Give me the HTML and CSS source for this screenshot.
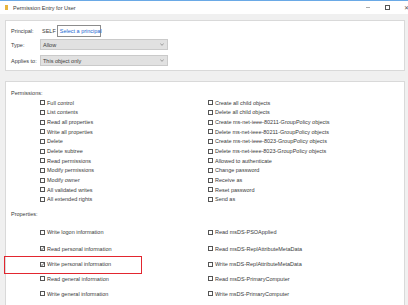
FILE: index.html
```html
<!DOCTYPE html>
<html lang="en">
<head>
  <meta charset="UTF-8" />
  <title>Permission Entry for User</title>
  <link rel="stylesheet" href="styles.css">
</head>
<body>
  <div class="titlebar">
    <span class="folder"></span>
    <span class="title">Permission Entry for User</span>
    <div class="controls">
      <span class="min"></span>
      <span class="max"></span>
      <span class="close">✕</span>
    </div>
  </div>

  <div class="main">
    <!-- principal / type / applies to -->
    <div class="panel head">
      <div class="field principal">
        <span class="label">Principal:</span>
        <span class="self">SELF</span>
        <button class="pick" type="button">Select a principal</button>
      </div>
      <div class="field type">
        <span class="label">Type:</span>
        <div class="combo">Allow
          <svg class="chev" viewBox="0 0 6 4"><path d="M0.5 0.8 L3 3.2 L5.5 0.8" /></svg>
        </div>
      </div>
      <div class="field applies">
        <span class="label">Applies to:</span>
        <div class="combo">This object only
          <svg class="chev" viewBox="0 0 6 4"><path d="M0.5 0.8 L3 3.2 L5.5 0.8" /></svg>
        </div>
      </div>
    </div>

    <!-- permissions and properties -->
    <div class="panel perms">
      <div class="section">Permissions:</div>
      <div class="checks">
        <label class="chk"><span class="box"></span>Full control</label>
        <label class="chk"><span class="box"></span>List contents</label>
        <label class="chk"><span class="box"></span>Read all properties</label>
        <label class="chk"><span class="box"></span>Write all properties</label>
        <label class="chk"><span class="box"></span>Delete</label>
        <label class="chk"><span class="box"></span>Delete subtree</label>
        <label class="chk"><span class="box"></span>Read permissions</label>
        <label class="chk"><span class="box"></span>Modify permissions</label>
        <label class="chk"><span class="box"></span>Modify owner</label>
        <label class="chk"><span class="box"></span>All validated writes</label>
        <label class="chk"><span class="box"></span>All extended rights</label>

        <label class="chk"><span class="box"></span>Create all child objects</label>
        <label class="chk"><span class="box"></span>Delete all child objects</label>
        <label class="chk"><span class="box"></span>Create ms-net-ieee-80211-GroupPolicy objects</label>
        <label class="chk"><span class="box"></span>Delete ms-net-ieee-80211-GroupPolicy objects</label>
        <label class="chk"><span class="box"></span>Create ms-net-ieee-8023-GroupPolicy objects</label>
        <label class="chk"><span class="box"></span>Delete ms-net-ieee-8023-GroupPolicy objects</label>
        <label class="chk"><span class="box"></span>Allowed to authenticate</label>
        <label class="chk"><span class="box"></span>Change password</label>
        <label class="chk"><span class="box"></span>Receive as</label>
        <label class="chk"><span class="box"></span>Reset password</label>
        <label class="chk"><span class="box"></span>Send as</label>
      </div>

      <div class="section props-title">Properties:</div>
      <div class="checks props">
        <label class="chk"><span class="box"></span>Write logon information</label>
        <label class="chk"><span class="box"><svg viewBox="0 0 5 5"><path d="M0.9 2.4 L2 3.6 L4.1 1.1" /></svg></span>Read personal information</label>
        <label class="chk marked"><span class="box"><svg viewBox="0 0 5 5"><path d="M0.9 2.4 L2 3.6 L4.1 1.1" /></svg></span>Write personal information</label>
        <label class="chk"><span class="box"></span>Read general information</label>
        <label class="chk"><span class="box"></span>Write general information</label>

        <label class="chk"><span class="box"></span>Read msDS-PSOApplied</label>
        <label class="chk"><span class="box"></span>Read msDS-ReplAttributeMetaData</label>
        <label class="chk"><span class="box"></span>Write msDS-ReplAttributeMetaData</label>
        <label class="chk"><span class="box"></span>Read msDS-PrimaryComputer</label>
        <label class="chk"><span class="box"></span>Write msDS-PrimaryComputer</label>
      </div>
    </div>
  </div>
</body>
</html>
```

FILE: styles.css
```css
body {
  margin: 0;
  width: 408px;
  height: 305px;
  overflow: hidden;
  background: #f0f0f0;
  font-family: "Liberation Sans", Arial, sans-serif;
  font-size: 5.5px;
  color: #3a3a3a;
}
/* Title bar */
.titlebar {
  height: 13px;
  background: #fff;
  border-top: 1px solid #6aa9e6;
  display: flex;
  align-items: center;
  padding-left: 5px;
}
.folder {
  width: 3px; height: 5px;
  background: #e8b53e;
  margin-right: 5px;
}
.title { color: #3a3a3a; }
.controls {
  margin-left: auto;
  margin-right: -2px;
  display: flex;
  align-items: center;
}
.min { width: 4px; height: 1px; background: #aaa; }
.max {
  width: 5px; height: 5px;
  border: 1px solid #555;
  box-sizing: border-box;
  margin-left: 15px;
}
.close {
  width: 6px;
  margin-left: 14px;
  font-size: 6px;
  color: #555;
}
/* Panels */
.main { padding: 6px 0 0 5px; }
.panel {
  width: 400px;
  box-sizing: border-box;
  background: #fff;
  border: 1px solid #d9d9d9;
}
.head { padding: 3.5px 5px 4px; }
.field { display: flex; align-items: center; }
.label { width: 29px; }
.principal { height: 12px; }
.type { margin-top: 2.5px; }
.applies { margin-top: 5px; }
.self { padding-left: 2px; }
.pick {
  margin-left: 1px;
  width: 44px; height: 12px;
  padding: 0 0 0 2px;
  text-align: left;
  white-space: nowrap;
  font: inherit;
  color: #1766d1;
  background: #fff;
  border: 1px solid #8c8c8c;
  border-radius: 0;
}
.combo {
  width: 128px; height: 11px;
  box-sizing: border-box;
  background: #e1e1e1;
  border: 1px solid #cacaca;
  padding: 0 3px 0 2px;
  display: flex;
  align-items: center;
  justify-content: space-between;
}
.chev { width: 4px; height: 3px; }
.chev path { fill: none; stroke: #666; stroke-width: 0.9; }

.perms {
  margin-top: 10px;
  height: 224px;
  border-bottom: 0;
  padding: 6px 5px 0;
}
.section { line-height: 10px; height: 10px; }
.props-title { margin-top: 5px; }
.checks {
  margin-left: 29px;
  display: grid;
  grid-auto-flow: column;
  grid-template-columns: 168px 168px;
  grid-template-rows: repeat(11, 9.67px);
}
.props {
  margin-top: 5px;
  grid-template-rows: 16px 17px 14px 15px 15px;
}
.chk {
  display: flex;
  align-items: center;
  gap: 2px;
  white-space: nowrap;
  position: relative;
}
.box {
  width: 5px; height: 5px;
  box-sizing: border-box;
  border: 1px solid #555;
  background: #fff;
  display: flex;
}
.box svg { width: 5px; height: 5px; margin: -1px; }
.box path { fill: none; stroke: #333; stroke-width: 0.7; }
/* red annotation round one row */
.marked::before {
  content: "";
  position: absolute;
  left: -36px; top: -1.7px;
  width: 138px; height: 18.6px;
  box-sizing: border-box;
  border: 1.6px solid #e2262f;
}
```
